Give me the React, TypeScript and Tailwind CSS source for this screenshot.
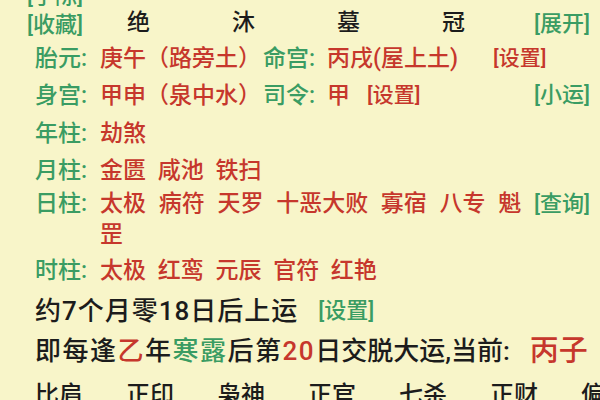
const G = "text-[#3a9c63]";
const R = "text-[#c6372c]";

function Row({ h, children, className = "" }: { h: string; children: React.ReactNode; className?: string }) {
  return <div className={`flex items-center pl-[35px] pr-[10px] ${h} ${className}`}>{children}</div>;
}

export default function App() {
  return (
    <div className="w-[600px] h-[400px] overflow-hidden bg-[#f8f5c9] font-['Roboto','Noto_Sans_CJK_SC',sans-serif] font-medium text-[23px] leading-none text-[#1c1c1c]">
      {/* header */}
      <div className="flex h-[40px] pr-[10px]">
        <div className={`w-[86px] pl-[27px] flex flex-col -mt-[19px] text-[22px] ${G}`}>
          <div className="h-[32px] flex items-center">[手陈]</div>
          <div className="h-[32px] flex items-center">[收藏]</div>
        </div>
        {["绝", "沐", "墓", "冠"].map((c) => (
          <div key={c} className="w-[105px] text-center pt-[11px]">
            {c}
          </div>
        ))}
        <div className={`ml-auto pt-[13px] text-[22px] ${G}`}>[展开]</div>
      </div>

      <Row h="h-[36px]">
        <span className={`w-[65px] shrink-0 ${G}`}>胎元:</span>
        <span className={`w-[163px] shrink-0 ${R}`}>庚午（路旁土）</span>
        <span className={`w-[64px] shrink-0 ${G}`}>命宫:</span>
        <span className={R}>丙戌(屋上土)</span>
        <span className={`ml-[35px] text-[21px] ${R}`}>[设置]</span>
      </Row>

      <Row h="h-[38px]">
        <span className={`w-[65px] shrink-0 ${G}`}>身宫:</span>
        <span className={`w-[163px] shrink-0 ${R}`}>甲申（泉中水）</span>
        <span className={`w-[64px] shrink-0 ${G}`}>司令:</span>
        <span className={R}>甲</span>
        <span className={`ml-[17px] text-[21px] ${R}`}>[设置]</span>
        <span className={`ml-auto text-[22px] ${G}`}>[小运]</span>
      </Row>

      <Row h="h-[38px]">
        <span className={`w-[65px] shrink-0 ${G}`}>年柱:</span>
        <span className={R}>劫煞</span>
      </Row>

      <Row h="h-[36px]">
        <span className={`w-[65px] shrink-0 ${G}`}>月柱:</span>
        <span className={`${R} [word-spacing:6px]`}>金匮 咸池 铁扫</span>
      </Row>

      <div className="flex items-start pl-[35px] pr-[10px] h-[62px] leading-[31px]">
        <span className={`w-[65px] shrink-0 ${G}`}>日柱:</span>
        <span className={`flex-1 ${R} [word-spacing:7px]`}>太极 病符 天罗 十恶大败 寡宿 八专 魁罡</span>
        <span className={`text-[22px] ${G}`}>[查询]</span>
      </div>

      <Row h="h-[40px]">
        <span className={`w-[65px] shrink-0 ${G}`}>时柱:</span>
        <span className={`${R} [word-spacing:6px]`}>太极 红鸾 元辰 官符 红艳</span>
      </Row>

      <Row h="h-[41px]" className="text-[26px]">
        <span className="tracking-[1px]">约7个月零18日后上运</span>
        <span className={`ml-[20px] text-[22px] ${G}`}>[设置]</span>
      </Row>

      <Row h="h-[40px]" className="text-[26px] whitespace-nowrap">
        <span className="tracking-[1.5px]">
          即每逢<span className={R}>乙</span>年<span className={G}>寒露</span>后第<span className={R}>20</span>
        </span>
        <span>日交脱大运,当前:</span>
        <span className={`ml-[20px] text-[29px] ${R}`}>丙子</span>
      </Row>

      <div className="flex pl-[35px] h-[48px] items-center text-[24px] whitespace-nowrap">
        {["比肩", "正印", "枭神", "正官", "七杀", "正财", "偏财"].map((t) => (
          <span key={t} className="w-[91px] shrink-0">
            {t}
          </span>
        ))}
      </div>
    </div>
  );
}
